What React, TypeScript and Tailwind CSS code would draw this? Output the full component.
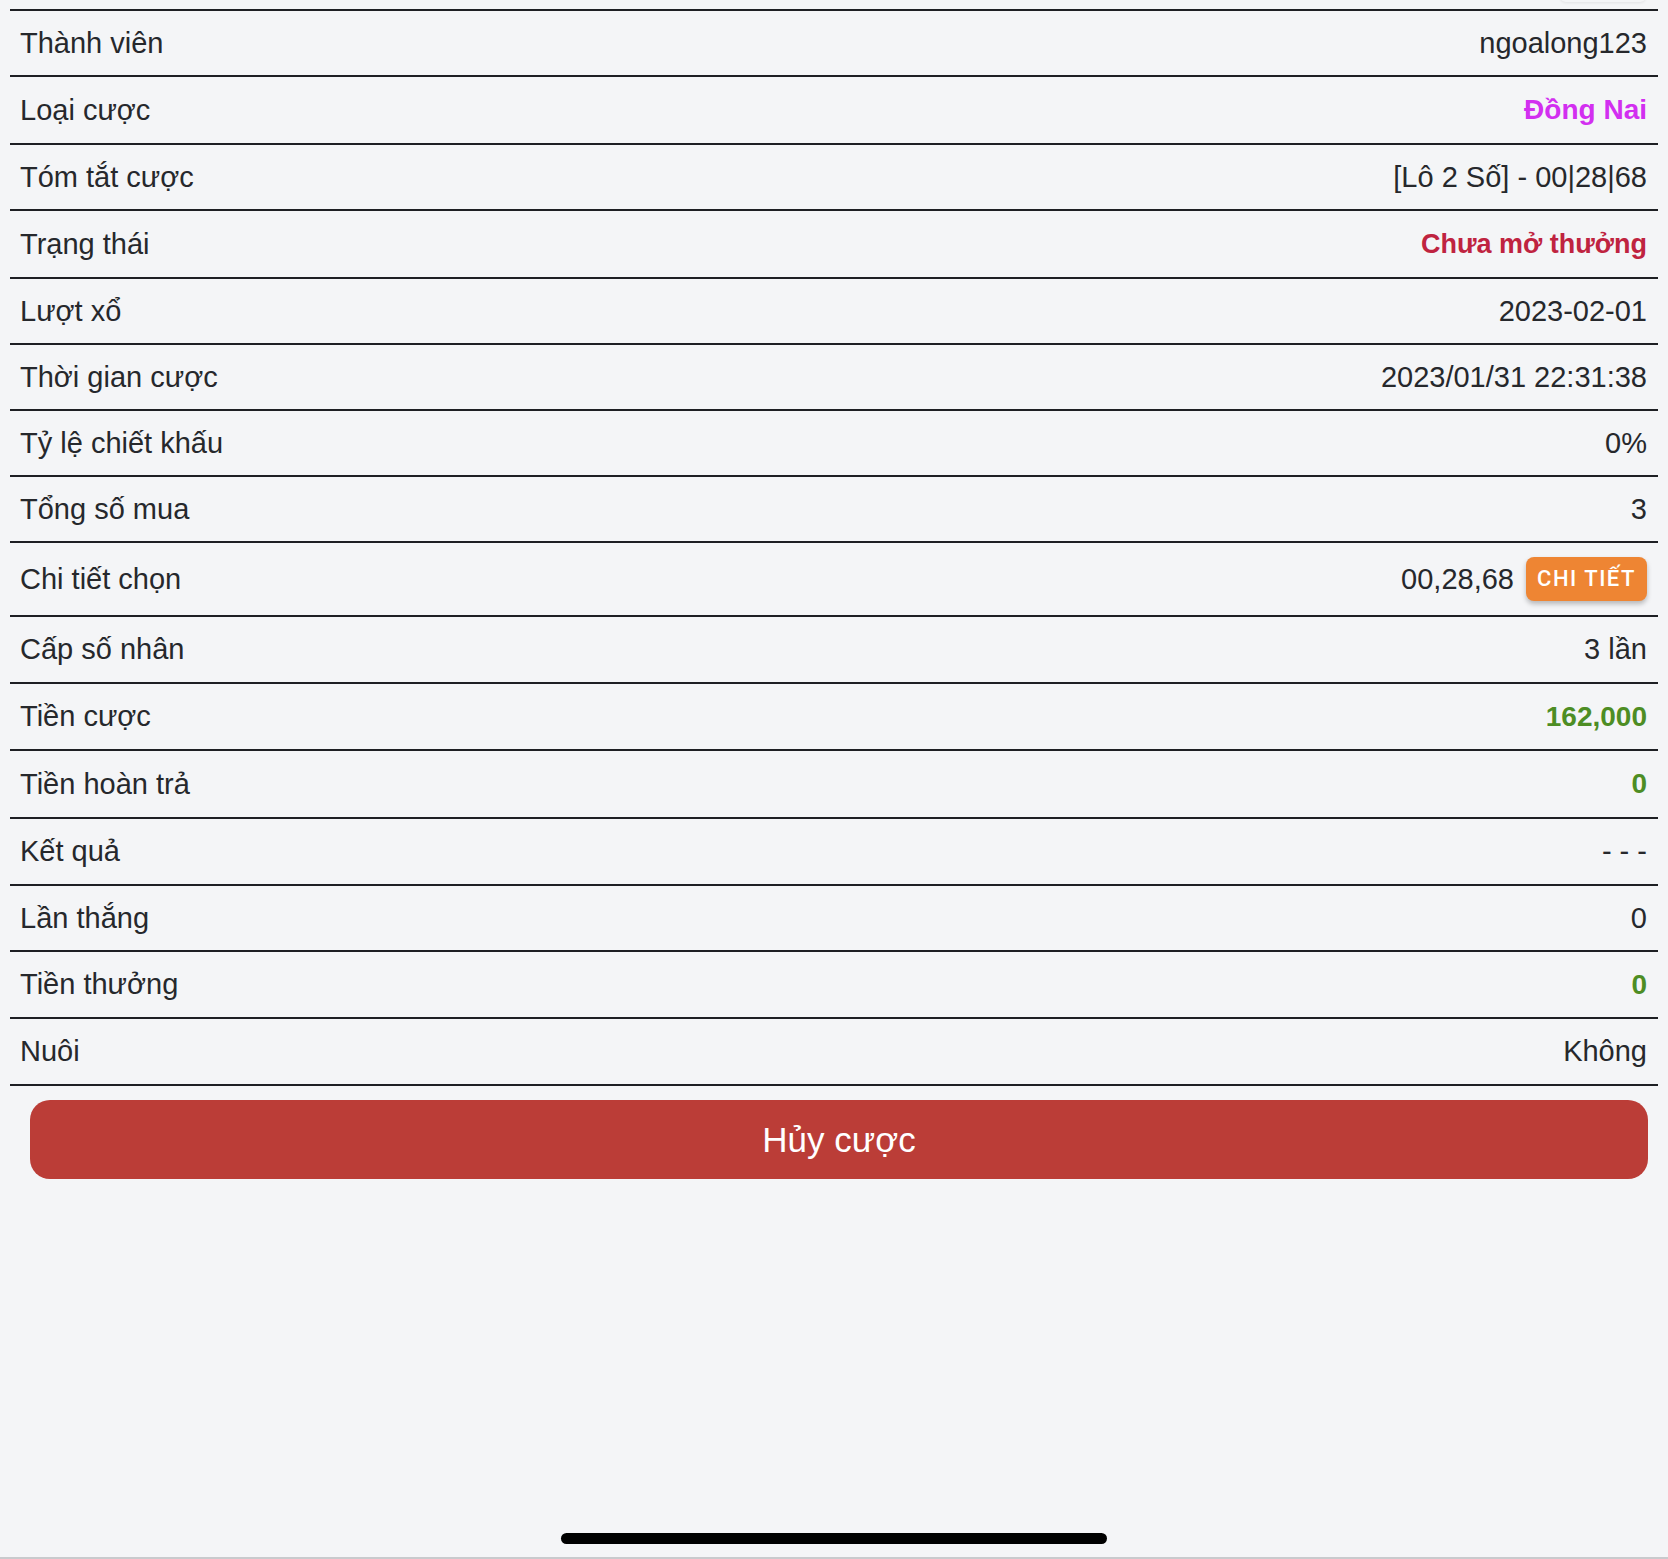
import React from "react";

type Row = {
  label: string;
  value: string;
  h: string;
  tone?: "plain" | "magenta" | "crimson" | "green";
  detail?: boolean;
};

// heights follow the screenshot, rows are not all exactly equal
const rows: Row[] = [
  { label: "Thành viên", value: "ngoalong123", h: "h-[66px]" },
  { label: "Loại cược", value: "Đồng Nai", tone: "magenta", h: "h-[68px]" },
  { label: "Tóm tắt cược", value: "[Lô 2 Số] - 00|28|68", h: "h-[66px]" },
  { label: "Trạng thái", value: "Chưa mở thưởng", tone: "crimson", h: "h-[68px]" },
  { label: "Lượt xổ", value: "2023-02-01", h: "h-[66px]" },
  { label: "Thời gian cược", value: "2023/01/31 22:31:38", h: "h-[66px]" },
  { label: "Tỷ lệ chiết khấu", value: "0%", h: "h-[66px]" },
  { label: "Tổng số mua", value: "3", h: "h-[66px]" },
  { label: "Chi tiết chọn", value: "00,28,68", detail: true, h: "h-[74px]" },
  { label: "Cấp số nhân", value: "3 lần", h: "h-[67px]" },
  { label: "Tiền cược", value: "162,000", tone: "green", h: "h-[67px]" },
  { label: "Tiền hoàn trả", value: "0", tone: "green", h: "h-[68px]" },
  { label: "Kết quả", value: "- - -", h: "h-[67px]" },
  { label: "Lần thắng", value: "0", h: "h-[66px]" },
  { label: "Tiền thưởng", value: "0", tone: "green", h: "h-[67px]" },
  { label: "Nuôi", value: "Không", h: "h-[67px]" },
];

const toneClass: Record<string, string> = {
  plain: "text-[#26282c]",
  magenta: "text-[#d22ff0] text-[28px] font-bold",
  crimson: "text-[#bf2340] text-[27px] font-semibold",
  green: "text-[#4d8d24] text-[28px] font-bold",
};

function DetailRow({ row }: { row: Row }) {
  return (
    <div
      className={`flex items-center justify-between border-t-2 border-[#1e1f24] pl-[10px] pr-[11px] ${row.h}`}
    >
      <div className="text-[#26282c]">{row.label}</div>
      <div className="flex items-center gap-3">
        <span className={toneClass[row.tone ?? "plain"]}>{row.value}</span>
        {row.detail && (
          <button
            type="button"
            className="h-[44px] w-[121px] rounded-lg bg-[#ee8533] font-['Roboto',sans-serif] text-[22px] font-medium tracking-[1.5px] text-white shadow-[0_3px_5px_rgba(0,0,0,0.25)]"
          >
            CHI TIẾT
          </button>
        )}
      </div>
    </div>
  );
}

export default function App() {
  return (
    <div
      className="relative flex h-[1559px] w-full flex-col bg-[#f4f5f7] text-[29px] leading-none"
      style={{ fontFamily: '"Liberation Sans", Arial, sans-serif' }}
    >
      {/* tail of the card above, mostly scrolled away */}
      <div className="absolute right-[22px] top-[-10px] h-[12px] w-[86px] rounded-lg bg-[#f4f5f7] shadow-[0_1px_3px_rgba(0,0,0,0.08)]" />

      <div className="mx-[10px] mt-[9px] border-b-2 border-[#1e1f24]">
        {rows.map((r) => (
          <DetailRow key={r.label} row={r} />
        ))}
      </div>

      <div className="ml-[30px] mr-[20px] mt-[14px]">
        <button
          type="button"
          className="flex h-[79px] w-full items-center justify-center rounded-[20px] bg-[#bb3d37] text-[35px] text-white"
        >
          Hủy cược
        </button>
      </div>

      <div className="flex-1" />

      <div className="flex justify-center pb-[13px]">
        <div className="h-[11px] w-[546px] rounded-full bg-black" />
      </div>
      <div className="h-[2px] bg-[#c9cacd]" />
    </div>
  );
}
